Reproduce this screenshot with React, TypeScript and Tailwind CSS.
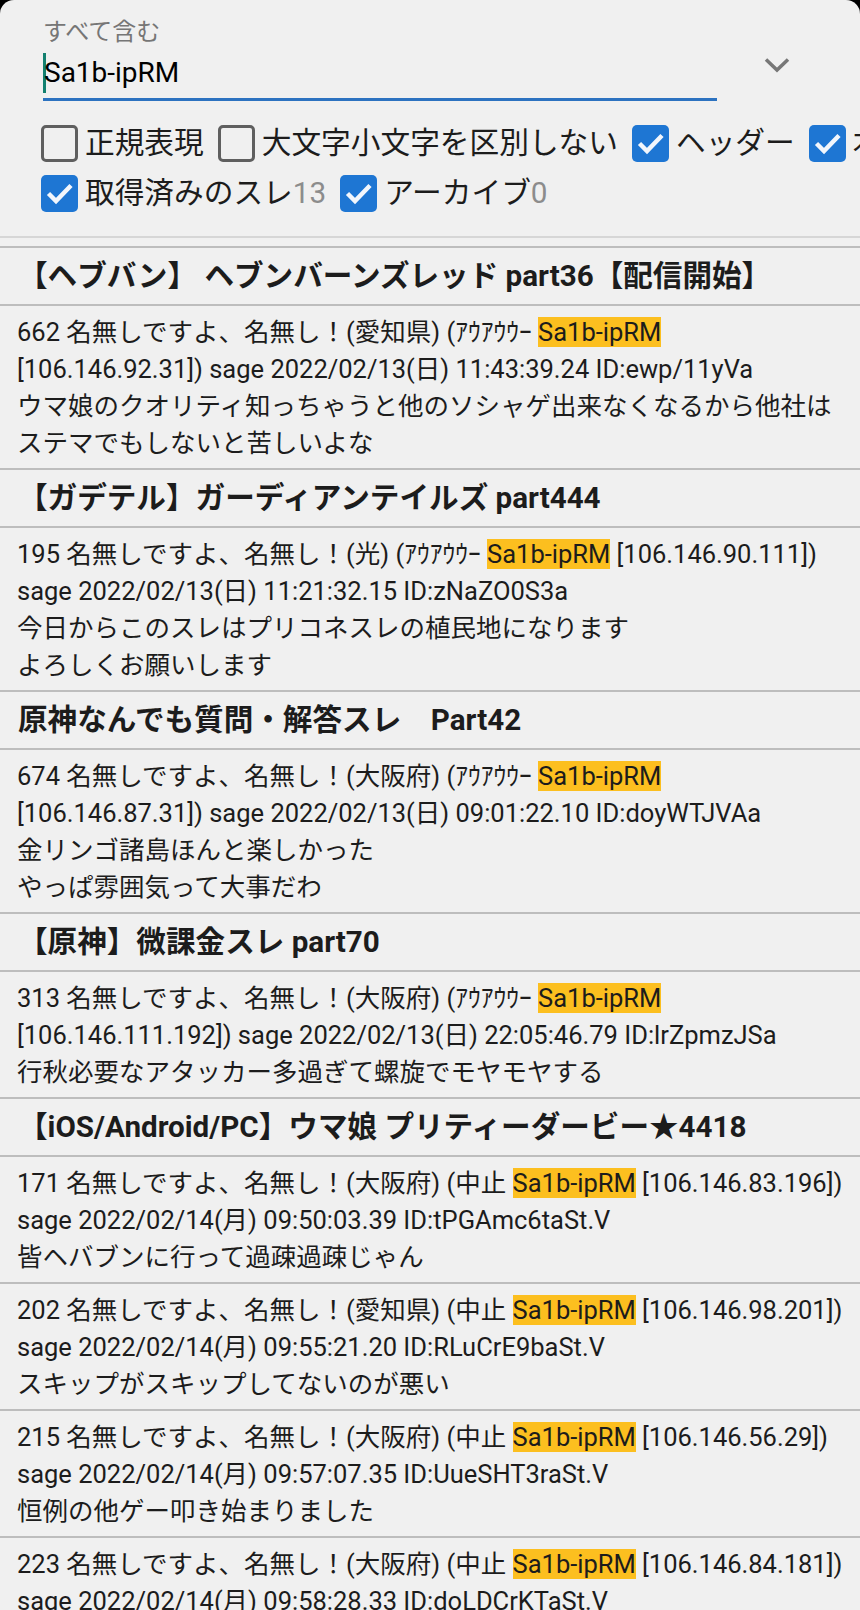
import React from 'react'

const KEY = 'Sa1b-ipRM'

type Thread = { title: string; posts: string[][] }

const threads: Thread[] = [
  {
    title: '【ヘブバン】 ヘブンバーンズレッド part36【配信開始】',
    posts: [
      [
        '662 名無しですよ、名無し！(愛知県) (ｱｳｱｳｳｰ Sa1b-ipRM',
        '[106.146.92.31]) sage 2022/02/13(日) 11:43:39.24 ID:ewp/11yVa',
        'ウマ娘のクオリティ知っちゃうと他のソシャゲ出来なくなるから他社は',
        'ステマでもしないと苦しいよな',
      ],
    ],
  },
  {
    title: '【ガデテル】ガーディアンテイルズ part444',
    posts: [
      [
        '195 名無しですよ、名無し！(光) (ｱｳｱｳｳｰ Sa1b-ipRM [106.146.90.111])',
        'sage 2022/02/13(日) 11:21:32.15 ID:zNaZO0S3a',
        '今日からこのスレはプリコネスレの植民地になります',
        'よろしくお願いします',
      ],
    ],
  },
  {
    title: '原神なんでも質問・解答スレ　Part42',
    posts: [
      [
        '674 名無しですよ、名無し！(大阪府) (ｱｳｱｳｳｰ Sa1b-ipRM',
        '[106.146.87.31]) sage 2022/02/13(日) 09:01:22.10 ID:doyWTJVAa',
        '金リンゴ諸島ほんと楽しかった',
        'やっぱ雰囲気って大事だわ',
      ],
    ],
  },
  {
    title: '【原神】微課金スレ part70',
    posts: [
      [
        '313 名無しですよ、名無し！(大阪府) (ｱｳｱｳｳｰ Sa1b-ipRM',
        '[106.146.111.192]) sage 2022/02/13(日) 22:05:46.79 ID:lrZpmzJSa',
        '行秋必要なアタッカー多過ぎて螺旋でモヤモヤする',
      ],
    ],
  },
  {
    title: '【iOS/Android/PC】ウマ娘 プリティーダービー★4418',
    posts: [
      [
        '171 名無しですよ、名無し！(大阪府) (中止 Sa1b-ipRM [106.146.83.196])',
        'sage 2022/02/14(月) 09:50:03.39 ID:tPGAmc6taSt.V',
        '皆ヘバブンに行って過疎過疎じゃん',
      ],
      [
        '202 名無しですよ、名無し！(愛知県) (中止 Sa1b-ipRM [106.146.98.201])',
        'sage 2022/02/14(月) 09:55:21.20 ID:RLuCrE9baSt.V',
        'スキップがスキップしてないのが悪い',
      ],
      [
        '215 名無しですよ、名無し！(大阪府) (中止 Sa1b-ipRM [106.146.56.29])',
        'sage 2022/02/14(月) 09:57:07.35 ID:UueSHT3raSt.V',
        '恒例の他ゲー叩き始まりました',
      ],
      [
        '223 名無しですよ、名無し！(大阪府) (中止 Sa1b-ipRM [106.146.84.181])',
        'sage 2022/02/14(月) 09:58:28.33 ID:doLDCrKTaSt.V',
      ],
    ],
  },
]

function Line({ text }: { text: string }) {
  const parts = text.split(KEY)
  return (
    <div>
      {parts.map((p, i) => (
        <React.Fragment key={i}>
          {p}
          {i < parts.length - 1 && <span className="bg-[#fcbf1f]">{KEY}</span>}
        </React.Fragment>
      ))}
    </div>
  )
}

function Box({ checked }: { checked: boolean }) {
  if (!checked) {
    return <span className="w-[37px] h-[37px] shrink-0 rounded-[5px] border-[3px] border-[#5f5f5f]" />
  }
  return (
    <span className="w-[37px] h-[37px] shrink-0 rounded-[5px] bg-[#1e76d3] flex">
      <svg width="37" height="37" viewBox="0 0 37 37">
        <path d="M7.5 18.5l7.5 7.5L30 10.5" stroke="#f2f6fc" strokeWidth="4.5" fill="none" />
      </svg>
    </span>
  )
}

function Opt({ checked, label, count }: { checked: boolean; label: string; count?: number }) {
  return (
    <div className="flex items-center shrink-0 mr-[14px]">
      <Box checked={checked} />
      <span className="ml-[7px]">
        {label}
        {count !== undefined && <span className="text-[#8c8c8c]">{count}</span>}
      </span>
    </div>
  )
}

export default function App() {
  return (
    <div className="bg-black min-h-[1610px] font-['Roboto','Noto_Sans_CJK_JP',sans-serif] text-[#1c1c1c]">
      <div className="bg-[#f0f0f0] min-h-[1610px] rounded-t-[14px] overflow-hidden">
        {/* search header */}
        <div className="border-b-2 border-[#d6d6d6] pl-[41px] pt-[17px] pb-[18px]">
          <div className="flex">
            <div className="w-[674px] ml-[2px]">
              <div className="text-[24px] leading-[30px] text-[#767676]">すべて含む</div>
              <div className="mt-[6px] h-[40px] flex items-center text-[28px] leading-[40px] text-black">
                <span className="w-[3px] h-[40px] bg-[#13806f]" />
                <span className="-ml-[2px]">Sa1b-ipRM</span>
              </div>
              <div className="mt-[5px] h-[3px] bg-[#2c72c0]" />
            </div>
            <svg className="ml-[47px] mt-[40px]" width="26" height="16" viewBox="0 0 26 16">
              <path d="M2 2.5l11 10.5L24 2.5" stroke="#777" strokeWidth="3.5" fill="none" />
            </svg>
          </div>
          <div className="mt-[17px] text-[29.7px] leading-none whitespace-nowrap">
            <div className="flex items-center h-[50px]">
              <Opt checked={false} label="正規表現" />
              <Opt checked={false} label="大文字小文字を区別しない" />
              <Opt checked label="ヘッダー" />
              <Opt checked label="本文" />
            </div>
            <div className="flex items-center h-[50px]">
              <Opt checked label="取得済みのスレ" count={13} />
              <Opt checked label="アーカイブ" count={0} />
            </div>
          </div>
        </div>

        {/* results */}
        <div className="mt-[8px] border-t-2 border-[#bdbdbd]">
          {threads.map((t) => (
            <div key={t.title}>
              <div className="h-[58px] flex items-center pl-[18px] text-[29.6px] font-bold whitespace-nowrap border-b-2 border-[#bdbdbd]">
                {t.title}
              </div>
              {t.posts.map((p) => (
                <div
                  key={p[0]}
                  className="pl-[17px] pt-[8px] pb-[6px] text-[25.5px] leading-[37px] whitespace-nowrap overflow-hidden border-b-2 border-[#bdbdbd]"
                >
                  {p.map((l) => (
                    <Line key={l} text={l} />
                  ))}
                </div>
              ))}
            </div>
          ))}
        </div>
      </div>
    </div>
  )
}
